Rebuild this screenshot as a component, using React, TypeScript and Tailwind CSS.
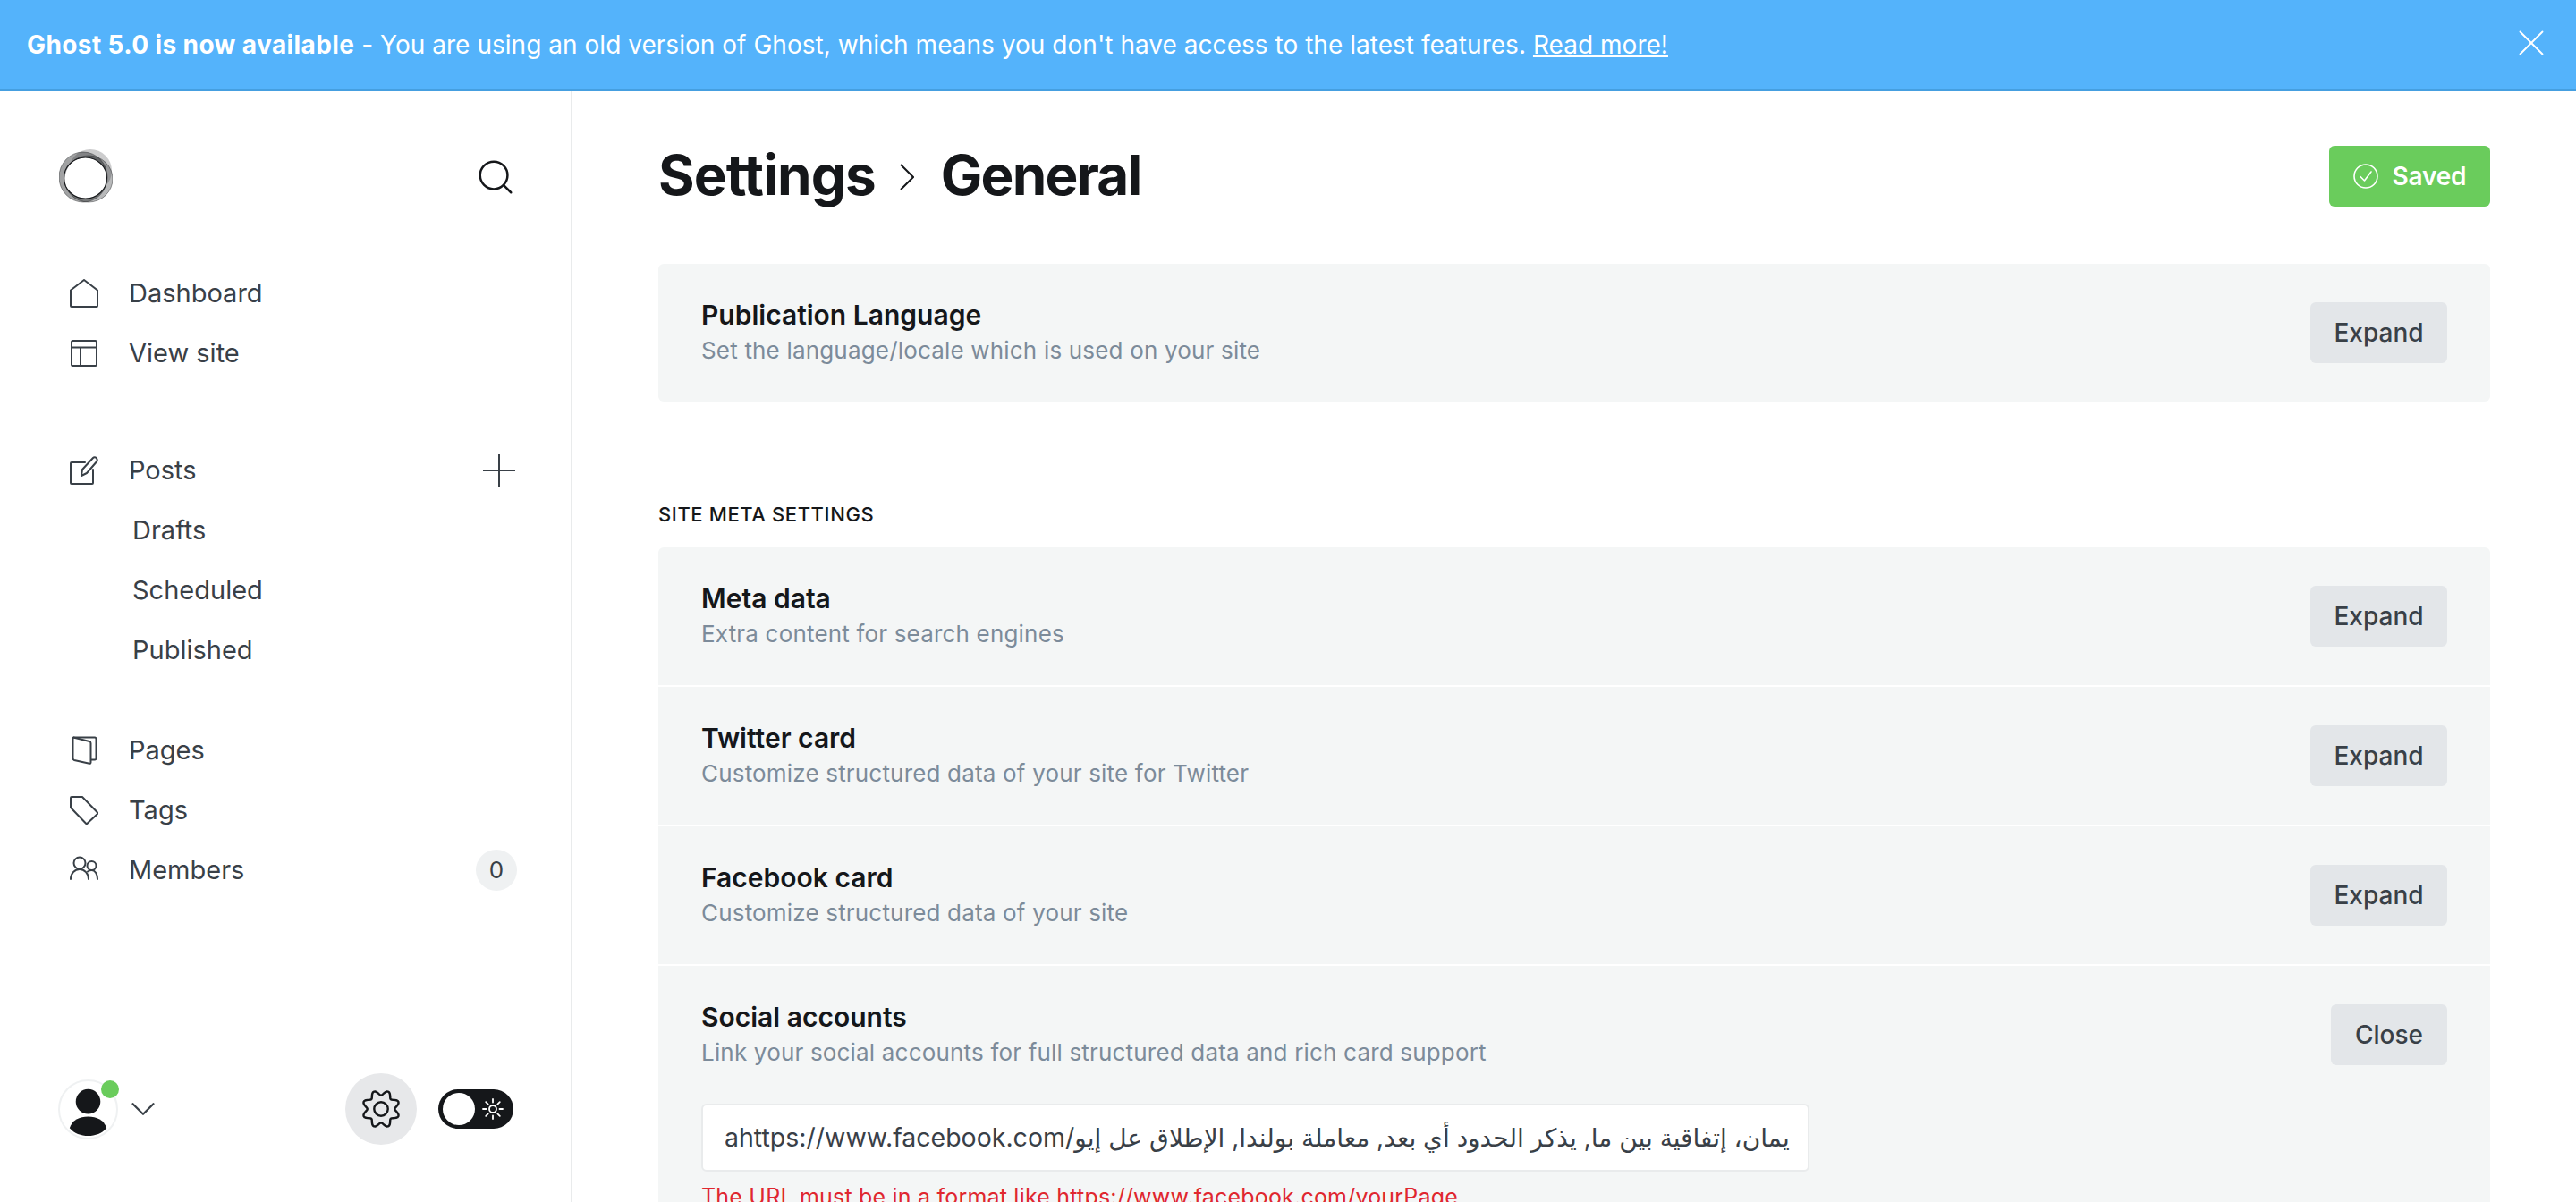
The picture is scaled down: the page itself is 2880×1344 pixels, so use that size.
import { X, ChevronDown, Search } from 'lucide-react';

const iconClass = 'w-8 h-8 shrink-0';

// wavy eight lobed cog outline
const gearPath =
    Array.from({ length: 97 }, (_, i) => {
        const t = (i / 96) * Math.PI * 2;
        const r = 16.5 + 2.6 * Math.cos(8 * t + Math.PI);
        return `${i === 0 ? 'M' : 'L'}${(20 + r * Math.cos(t)).toFixed(2)} ${(20 + r * Math.sin(t)).toFixed(2)}`;
    }).join(' ') + 'z';

function HomeIcon() {
    return (
        <svg viewBox="0 0 32 32" className={iconClass} fill="none" stroke="#394047" strokeWidth="2" strokeLinejoin="round">
            <path d="M1 12.500 16 1l15 11.500V30a1 1 0 0 1-1 1H2a1 1 0 0 1-1-1z" />
        </svg>
    );
}

function LayoutIcon() {
    return (
        <svg viewBox="0 0 32 32" className={iconClass} fill="none" stroke="#394047" strokeWidth="2" strokeLinejoin="round">
            <rect x="2" y="2" width="28" height="28" rx="1.500" />
            <path d="M2 9.500h28M12 9.500V30" />
        </svg>
    );
}

function PostIcon() {
    return (
        <svg viewBox="0 0 32 32" className={iconClass} fill="none" stroke="#394047" strokeWidth="2" strokeLinecap="round" strokeLinejoin="round">
            <path d="M17 7H2a1 1 0 0 0-1 1v22a1 1 0 0 0 1 1h23a1 1 0 0 0 1-1V15" />
            <path d="M13 22l1-7L26 2c1-1 3-1 4 .500s.8 3-.2 4L19 19z" />
        </svg>
    );
}

function PagesIcon() {
    return (
        <svg viewBox="0 0 32 32" className={iconClass} fill="none" stroke="#394047" strokeWidth="2" strokeLinejoin="round">
            <path d="M4 1.500h24a1.500 1.500 0 0 1 1.500 1.500v22a1.500 1.500 0 0 1-1.500 1.500h-4" />
            <path d="M4 1.500 22 6a2 2 0 0 1 1.500 2v21.500c0 1-.8 1.500-1.500 1.300L5 27a2 2 0 0 1-1.500-2V2.500z" />
        </svg>
    );
}

function TagIcon() {
    return (
        <svg viewBox="0 0 32 32" className={iconClass} fill="none" stroke="#394047" strokeWidth="2" strokeLinejoin="round">
            <path d="M2 1h12l17 17.500a1 1 0 0 1 0 1.400L19.500 30.800a1 1 0 0 1-1.400 0L1.500 13.500A2 2 0 0 1 1 12V2a1 1 0 0 1 1-1z" />
        </svg>
    );
}

function MembersIcon() {
    return (
        <svg viewBox="0 0 32 32" className={iconClass} fill="none" stroke="#394047" strokeWidth="2" strokeLinecap="round">
            <circle cx="11" cy="8" r="6.500" />
            <path d="M1 26c0-6.500 4.500-11 10-11s10 4.500 10 11" />
            <circle cx="24.500" cy="11" r="5" />
            <path d="M20 17.500c1.200-.8 3-1.500 4.500-1.500 3.500 0 6.500 4 6.500 10" />
        </svg>
    );
}

function NavItem({ icon, label, right }: { icon: React.ReactNode; label: string; right?: React.ReactNode }) {
    return (
        <div className="flex items-center justify-between h-[67px]">
            <div className="flex items-center gap-[34px]">
                {icon}
                <span className="text-[29px] text-[#394047]">{label}</span>
            </div>
            {right}
        </div>
    );
}

function SubItem({ label }: { label: string }) {
    return <div className="flex items-center h-[67px] pl-[70px] text-[29px] text-[#394047]">{label}</div>;
}

function GhostButton({ label, w }: { label: string; w: string }) {
    return (
        <button className={`${w} h-[68px] shrink-0 rounded-md bg-[#e3e6e9] text-[28px] font-medium text-[#394047]`}>
            {label}
        </button>
    );
}

function SettingRow({ title, desc, action = 'Expand' }: { title: string; desc: string; action?: string }) {
    return (
        <div className="flex items-center justify-between h-[154px] px-12">
            <div>
                <div className="text-[30px] leading-[40px] font-semibold text-[#15171a]">{title}</div>
                <div className="text-[26px] leading-[40px] tracking-[0.18px] text-[#7c8b9a]">{desc}</div>
            </div>
            <GhostButton label={action} w={action === 'Close' ? 'w-[130px]' : 'w-[153px]'} />
        </div>
    );
}

export default function App() {
    return (
        <div className="h-[1344px] overflow-hidden bg-white font-['Inter',sans-serif]">
            <div className="flex items-center justify-between h-[102px] pl-[30px] pr-[25px] bg-[#54b3fb] border-b-2 border-[#459fe0] text-white text-[28px] tracking-[0.03px]">
                <p>
                    <span className="font-bold tracking-[0.4px]">Ghost 5.0 is now available</span> - You are using an old version of Ghost, which means you don't have access to the latest features.{' '}
                    <a className="underline">Read more!</a>
                </p>
                <X className="w-[50px] h-[50px] -mt-1" strokeWidth={0.9} />
            </div>

            <div className="flex h-[1242px]">
                <aside className="w-[640px] shrink-0 border-r-2 border-[#e9ebec] flex flex-col justify-between pb-[64px]">
                    <div>
                        <div className="flex items-center justify-between h-[192px] pl-[66px] pr-[61px]">
                            <svg viewBox="0 0 60 60" className="w-[60px] h-[60px] -mt-[2px]" fill="none">
                                <ellipse cx="35" cy="24" rx="24" ry="24" fill="#15171a" opacity="0.22" />
                                <ellipse cx="27" cy="31" rx="27" ry="28" fill="#15171a" opacity="0.4" />
                                <ellipse cx="33" cy="33" rx="27" ry="26" fill="#15171a" opacity="0.3" />
                                <ellipse cx="29.500" cy="32" rx="24" ry="23" fill="#fff" />
                                <ellipse cx="29.500" cy="32" rx="24" ry="23" stroke="#15171a" strokeWidth="1.100" />
                                <ellipse cx="27" cy="31" rx="27" ry="28" stroke="#15171a" strokeWidth="0.7" opacity="0.6" />
                                <ellipse cx="33" cy="33" rx="27" ry="26" stroke="#15171a" strokeWidth="0.7" opacity="0.6" />
                            </svg>
                            <Search className="w-[46px] h-[46px] text-[#15171a]" strokeWidth={1.300} />
                        </div>
                        <nav className="px-[62px] pl-[78px]">
                            <NavItem icon={<HomeIcon />} label="Dashboard" />
                            <NavItem icon={<LayoutIcon />} label="View site" />
                            <div className="h-[64px]" />
                            <NavItem
                                icon={<PostIcon />}
                                label="Posts"
                                right={
                                    <svg viewBox="0 0 36 36" className="w-9 h-9" fill="none" stroke="#394047" strokeWidth="2">
                                        <path d="M18 0v36M0 18h36" />
                                    </svg>
                                }
                            />
                            <SubItem label="Drafts" />
                            <SubItem label="Scheduled" />
                            <SubItem label="Published" />
                            <div className="h-[45px]" />
                            <NavItem icon={<PagesIcon />} label="Pages" />
                            <NavItem icon={<TagIcon />} label="Tags" />
                            <NavItem
                                icon={<MembersIcon />}
                                label="Members"
                                right={
                                    <span className="flex items-center justify-center w-[46px] h-[46px] -mr-[2px] rounded-full bg-[#eff1f2] text-[26px] text-[#394047]">
                                        0
                                    </span>
                                }
                            />
                        </nav>
                    </div>

                    <div className="flex items-center justify-between pl-[65px] pr-[64px]">
                        <div className="flex items-center gap-[5px]">
                            <div className="relative w-[67px] h-[67px] rounded-full border-2 border-[#eff1f2]">
                                <svg viewBox="0 0 64 64" className="w-full h-full">
                                    <circle cx="32" cy="23" r="14" fill="#15171a" />
                                    <path d="M11 53c3-9 11-13 21-13s18 4 21 13c-5 6-13 9-21 9s-16-3-21-9z" fill="#15171a" />
                                </svg>
                                <span className="absolute -top-[1px] -right-[3px] w-5 h-5 rounded-full bg-[#6acc5c]" />
                            </div>
                            <ChevronDown className="w-[46px] h-[46px] text-[#394047]" strokeWidth={1.200} />
                        </div>
                        <div className="flex items-center gap-6">
                            <span className="flex items-center justify-center w-[80px] h-[80px] rounded-full bg-[#e7e8ea]">
                                <svg viewBox="0 0 40 40" className="w-[44px] h-[44px]" fill="none" stroke="#15171a" strokeWidth="2.200" strokeLinejoin="round">
                                    <circle cx="20" cy="20" r="7" />
                                    <path d={gearPath} />
                                </svg>
                            </span>
                            <span className="flex items-center w-[84px] h-[44px] rounded-full bg-[#15171a] pl-[5px]">
                                <span className="w-[36px] h-[36px] rounded-full bg-white" />
                                <svg viewBox="0 0 24 24" className="w-6 h-6 ml-[8px]" fill="none" stroke="#fff" strokeWidth="1.800" strokeLinecap="round">
                                    <circle cx="12" cy="12" r="4" />
                                    <path d="M12 1v3.500M12 19.500V23M1 12h3.500M19.500 12H23M4.200 4.200l2.500 2.500M17.300 17.300l2.500 2.500M4.200 19.800l2.500-2.500M17.300 6.700l2.500-2.500" />
                                </svg>
                            </span>
                        </div>
                    </div>
                </aside>

                <main className="flex-1 min-w-0 pl-[96px] pr-[96px]">
                    <div className="flex items-center justify-between h-[193px] pb-[3px]">
                        <h1 className="flex items-center -mt-1 text-[62px] font-bold tracking-[-0.9px] text-[#15171a]">
                            Settings
                            <svg viewBox="0 0 16 30" className="w-4 h-[30px] ml-[27px] mr-[30px] mt-[6px]" fill="none" stroke="#15171a" strokeWidth="2">
                                <path d="M1 1l14 14L1 29" />
                            </svg>
                            <span className="tracking-[-1.8px]">General</span>
                        </h1>
                        <button className="flex items-center justify-center gap-4 w-[180px] h-[68px] rounded-md bg-[#6acc5c] text-white text-[28px] font-semibold tracking-[-0.2px]">
                            <svg viewBox="0 0 28 28" className="w-7 h-7" fill="none" stroke="#fff" strokeWidth="1.600" strokeLinecap="round" strokeLinejoin="round">
                                <circle cx="14" cy="14" r="13" />
                                <path d="M8 14.500l4.500 4.500L20 9" />
                            </svg>
                            Saved
                        </button>
                    </div>

                    <div className="rounded-md bg-[#f4f6f6] overflow-hidden">
                        <SettingRow title="Publication Language" desc="Set the language/locale which is used on your site" />
                    </div>

                    <h2 className="mt-[111px] mb-[22px] text-[22px] leading-[30px] font-medium tracking-[0.6px] text-[#15171a] uppercase">
                        Site meta settings
                    </h2>

                    <div className="flex flex-col gap-[2px] rounded-md overflow-hidden">
                        <div className="bg-[#f4f6f6]">
                            <SettingRow title="Meta data" desc="Extra content for search engines" />
                        </div>
                        <div className="bg-[#f4f6f6]">
                            <SettingRow title="Twitter card" desc="Customize structured data of your site for Twitter" />
                        </div>
                        <div className="bg-[#f4f6f6]">
                            <SettingRow title="Facebook card" desc="Customize structured data of your site" />
                        </div>
                        <div className="bg-[#f4f6f6] h-[400px]">
                            <SettingRow
                                title="Social accounts"
                                desc="Link your social accounts for full structured data and rich card support"
                                action="Close"
                            />
                            <div className="px-12">
                                <div
                                    dir="ltr"
                                    className="flex items-center w-[1239px] h-[76px] px-6 overflow-hidden whitespace-nowrap rounded-md bg-white border-2 border-[#e9ebec] text-[28.5px] text-[#394047] font-['Inter','DejaVu_Sans',sans-serif]"
                                >
                                    <span>
                                        ahttps://www.facebook.com/
                                        <span className="text-[28px]">يمان، إتفاقية بين ما, يذكر الحدود أي بعد, معاملة بولندا, الإطلاق عل إيو</span>
                                    </span>
                                </div>
                                <p className="mt-[8px] text-[25px] leading-[40px] tracking-[0.2px] text-[#e0272f]">
                                    The URL must be in a format like https://www.facebook.com/yourPage
                                </p>
                            </div>
                        </div>
                    </div>
                </main>
            </div>
        </div>
    );
}
